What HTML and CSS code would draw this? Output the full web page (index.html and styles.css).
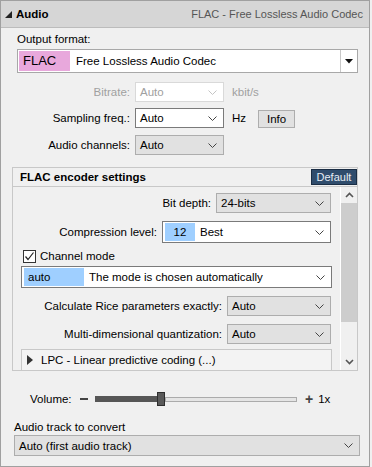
FILE: index.html
```html
<!DOCTYPE html>
<html lang="en">
<head>
    <meta charset="UTF-8">
    <title>Audio</title>
    <link rel="stylesheet" href="styles.css">
</head>
<body>
    <div class="panel">
        <div class="head">
            <svg class="head-arrow" width="8" height="8" viewBox="0 0 8 8"><polygon points="7,0 7,7 0,7" fill="#222"/></svg>
            <span class="head-title">Audio</span>
            <span class="head-info">FLAC - Free Lossless Audio Codec</span>
        </div>

        <div class="content">
            <div class="caption">Output format:</div>
            <div class="format-box">
                <span class="format-tag">FLAC</span>
                <span class="format-name">Free Lossless Audio Codec</span>
                <span class="format-drop">
                    <svg width="8" height="5" viewBox="0 0 8 5"><polygon points="0,0 8,0 4,4.5" fill="#111"/></svg>
                </span>
            </div>

            <div class="row first">
                <span class="lbl disabled">Bitrate:</span>
                <div class="combo combo-small off"><span>Auto</span><svg class="chev" width="9" height="5" viewBox="0 0 9 5"><polyline points="0.5,0.5 4.5,4.5 8.5,0.5" fill="none" stroke="#c4c4c4"/></svg></div>
                <span class="unit disabled">kbit/s</span>
            </div>
            <div class="row">
                <span class="lbl">Sampling freq.:</span>
                <div class="combo combo-small edit"><span>Auto</span><svg class="chev" width="9" height="5" viewBox="0 0 9 5"><polyline points="0.5,0.5 4.5,4.5 8.5,0.5" fill="none" stroke="#444"/></svg></div>
                <span class="unit">Hz</span>
                <button class="info-btn">Info</button>
            </div>
            <div class="row last">
                <span class="lbl">Audio channels:</span>
                <div class="combo combo-small"><span>Auto</span><svg class="chev" width="9" height="5" viewBox="0 0 9 5"><polyline points="0.5,0.5 4.5,4.5 8.5,0.5" fill="none" stroke="#444"/></svg></div>
            </div>

            <div class="group">
                <div class="group-head">
                    <span class="group-title">FLAC encoder settings</span>
                    <button class="default-btn">Default</button>
                </div>
                <div class="group-body">
                    <div class="group-inner">
                        <div class="grow">
                            <span class="glbl">Bit depth:</span>
                            <div class="combo w-bits"><span>24-bits</span><svg class="chev" width="9" height="5" viewBox="0 0 9 5"><polyline points="0.5,0.5 4.5,4.5 8.5,0.5" fill="none" stroke="#444"/></svg></div>
                        </div>
                        <div class="grow">
                            <span class="glbl">Compression level:</span>
                            <div class="combo edit w-comp tall"><span class="tag tag-num">12</span><span>Best</span><svg class="chev" width="9" height="5" viewBox="0 0 9 5"><polyline points="0.5,0.5 4.5,4.5 8.5,0.5" fill="none" stroke="#444"/></svg></div>
                        </div>
                        <label class="check-row">
                            <span class="check"><svg width="11" height="11" viewBox="0 0 11 11"><polyline points="1.5,5.5 4,8.5 9.5,1.5" fill="none" stroke="#222" stroke-width="1.2"/></svg></span>
                            Channel mode
                        </label>
                        <div class="combo edit w-full tall"><span class="tag tag-mode">auto</span><span>The mode is chosen automatically</span><svg class="chev" width="9" height="5" viewBox="0 0 9 5"><polyline points="0.5,0.5 4.5,4.5 8.5,0.5" fill="none" stroke="#444"/></svg></div>
                        <div class="grow">
                            <span class="glbl">Calculate Rice parameters exactly:</span>
                            <div class="combo w-auto"><span>Auto</span><svg class="chev" width="9" height="5" viewBox="0 0 9 5"><polyline points="0.5,0.5 4.5,4.5 8.5,0.5" fill="none" stroke="#444"/></svg></div>
                        </div>
                        <div class="grow">
                            <span class="glbl">Multi-dimensional quantization:</span>
                            <div class="combo w-auto"><span>Auto</span><svg class="chev" width="9" height="5" viewBox="0 0 9 5"><polyline points="0.5,0.5 4.5,4.5 8.5,0.5" fill="none" stroke="#444"/></svg></div>
                        </div>
                        <div class="lpc">
                            <svg width="6" height="10" viewBox="0 0 6 10"><polygon points="0,0 6,5 0,10" fill="#333"/></svg>
                            <span>LPC - Linear predictive coding (...)</span>
                        </div>
                    </div>
                    <div class="scrollbar">
                        <svg class="sb-arrow" width="9" height="6" viewBox="0 0 9 6"><polyline points="1,5 4.5,1.5 8,5" fill="none" stroke="#555" stroke-width="1.6"/></svg>
                        <div class="sb-track"><div class="sb-thumb"></div></div>
                        <svg class="sb-arrow" width="9" height="6" viewBox="0 0 9 6"><polyline points="1,1 4.5,4.5 8,1" fill="none" stroke="#555" stroke-width="1.6"/></svg>
                    </div>
                </div>
            </div>

            <div class="volume">
                <span class="vol-lbl">Volume:</span>
                <span class="vol-minus"></span>
                <div class="slider">
                    <div class="slider-fill" style="width: 62px"></div>
                    <div class="slider-thumb"></div>
                    <div class="slider-rest"></div>
                </div>
                <span class="vol-plus">+</span>
                <span class="vol-val">1x</span>
            </div>

            <div class="track-lbl">Audio track to convert</div>
            <div class="combo w-track"><span>Auto (first audio track)</span><svg class="chev" width="9" height="5" viewBox="0 0 9 5"><polyline points="0.5,0.5 4.5,4.5 8.5,0.5" fill="none" stroke="#444"/></svg></div>
        </div>
    </div>
</body>
</html>
```

FILE: styles.css
```css
body {
    margin: 0;
    background: #f0f0f0;
    font-family: 'Liberation Sans', Arial, sans-serif;
    font-size: 11px;
    color: #000;
}

.panel {
    width: 368px;
    height: 465px;
    border: 1px solid #a0a0a0;
    background: #f0f0f0;
    overflow: hidden;
}

.head {
    height: 26px;
    background: #d6d6d6;
    border-bottom: 1px solid #bcbcbc;
    display: flex;
    align-items: center;
    padding: 0 6px 0 4px;
    font-size: 11.5px;
}

.head-arrow {
    margin-right: 3px;
    margin-top: 1px;
}

.head-title {
    font-weight: bold;
}

.head-info {
    margin-left: auto;
    color: #555;
    font-size: 11px;
}

.content {
    padding: 0 0 0 11px;
}

.caption {
    margin: 4px 0 0 5px;
    line-height: 14px;
    font-size: 11.5px;
}

.format-box {
    margin: 3px 0 0 5px;
    width: 339px;
    height: 22px;
    border: 1px solid #a8a8a8;
    background: #fff;
    display: flex;
    align-items: center;
}

.format-tag {
    background: #e8a8dc;
    width: 47px;
    height: 20px;
    margin-left: 1px;
    padding-left: 4px;
    line-height: 20px;
    font-size: 13px;
}

.format-name {
    margin-left: 6px;
    font-size: 11.5px;
}

.format-drop {
    margin-left: auto;
    width: 16px;
    height: 22px;
    border-left: 1px solid #c8c8c8;
    display: flex;
    align-items: center;
    justify-content: center;
}

.row {
    display: flex;
    align-items: center;
    height: 20px;
    margin-top: 6px;
}

.row.first {
    margin-top: 9px;
}

.row.last {
    margin-top: 7px;
}

.lbl {
    width: 118px;
    text-align: right;
    margin-right: 5px;
    font-size: 11.5px;
}

.disabled {
    color: #a0a0a0;
}

.unit {
    margin-left: 8px;
    font-size: 11.5px;
}

.combo {
    box-sizing: border-box;
    height: 20px;
    border: 1px solid #adadad;
    background: #e1e1e1;
    display: flex;
    align-items: center;
    padding: 0 6px 0 4px;
    font-size: 11.5px;
}

.combo .chev {
    margin-left: auto;
}

.combo-small {
    width: 89px;
}

.combo.edit {
    background: #fff;
    border-color: #7a7a7a;
}

.combo.off {
    background: #fff;
    border-color: #d9d9d9;
    color: #a0a0a0;
}

.info-btn {
    margin-left: 12px;
    width: 37px;
    height: 18px;
    padding: 0;
    border: 1px solid #adadad;
    background: #e1e1e1;
    font: inherit;
    font-size: 11.5px;
    margin-top: 2px;
}

.group {
    margin: 12px 0 0 0;
    width: 344px;
    border: 1px solid #c8c8c8;
    background: #f0f0f0;
}

.group-head {
    height: 18px;
    display: flex;
    align-items: center;
    padding-left: 7px;
    border-bottom: 1px solid #c8c8c8;
}

.group-title {
    font-weight: bold;
    font-size: 11.5px;
}

.default-btn {
    margin-left: auto;
    width: 46px;
    height: 16px;
    padding: 0;
    background: #2f4c6c;
    border: 1px solid #1a2d44;
    color: #e6edf5;
    font: inherit;
    font-size: 11px;
}

.group-body {
    height: 183px;
    display: flex;
    overflow: hidden;
}

.group-inner {
    width: 310px;
    padding: 6px 9px 0 8px;
}

.grow {
    display: flex;
    align-items: center;
    justify-content: flex-end;
    margin-bottom: 8px;
}

.glbl {
    margin-right: 5px;
    font-size: 11.5px;
}

.w-bits {
    width: 115px;
}

.w-comp {
    width: 169px;
    padding-left: 2px;
}

.tall {
    height: 22px;
}

.tag {
    height: 18px;
    line-height: 18px;
    background: #9fcfff;
    margin-right: 5px;
}

.tag-num {
    width: 30px;
    text-align: center;
}

.tag-mode {
    width: 56px;
    padding-left: 4px;
}

.w-full {
    width: 311px;
    padding-left: 2px;
    margin-bottom: 8px;
}

.w-auto {
    width: 104px;
}

.check-row {
    display: flex;
    align-items: center;
    margin: -2px 0 3px 2px;
    height: 14px;
    font-size: 11.5px;
}

.check {
    box-sizing: border-box;
    width: 13px;
    height: 13px;
    border: 1px solid #333;
    background: #fff;
    margin-right: 4px;
    display: flex;
    align-items: center;
    justify-content: center;
}

.lpc {
    box-sizing: border-box;
    width: 311px;
    height: 22px;
    margin-top: -3px;
    border: 1px solid #c8c8c8;
    background: #f3f3f3;
    display: flex;
    align-items: center;
    padding-left: 5px;
    font-size: 11.5px;
}

.lpc svg {
    margin-right: 8px;
}

.scrollbar {
    width: 16px;
    border-left: 1px solid #fff;
    display: flex;
    flex-direction: column;
    align-items: center;
}

.sb-arrow {
    margin: 5px 0;
}

.sb-track {
    flex: 1;
    width: 100%;
}

.sb-thumb {
    height: 119px;
    background: #cdcdcd;
}

.volume {
    display: flex;
    align-items: center;
    height: 16px;
    margin: 20px 0 0 18px;
    font-size: 11.5px;
}

.vol-lbl {
    width: 50px;
}

.vol-minus {
    width: 8px;
    height: 2px;
    background: #444;
}

.slider {
    display: flex;
    align-items: center;
    margin-left: 7px;
    width: 202px;
}

.slider-fill {
    height: 6px;
    background: #565656;
}

.slider-thumb {
    box-sizing: border-box;
    width: 8px;
    height: 14px;
    background: #5a5a5a;
    border: 1px solid #2e2e2e;
}

.slider-rest {
    flex: 1;
    box-sizing: border-box;
    height: 5px;
    background: #e5e5e5;
    border: 1px solid #ababab;
}

.vol-plus {
    margin-left: 8px;
    font-weight: bold;
    font-size: 14px;
    color: #444;
}

.vol-val {
    margin-left: 5px;
}

.track-lbl {
    margin: 13px 0 0 2px;
    line-height: 14px;
    font-size: 11.5px;
}

.w-track {
    margin: 1px 0 0 2px;
    width: 346px;
    height: 21px;
    padding-left: 4px;
}
```
